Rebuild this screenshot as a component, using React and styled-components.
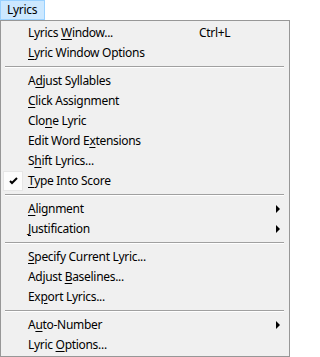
import React from "react";
import styled, { createGlobalStyle } from "styled-components";

const GlobalStyle = createGlobalStyle`
  body {
    margin: 0;
    background: #ffffff;
    font-family: "Segoe UI", "Noto Sans", "Open Sans", sans-serif;
    font-size: 12px;
    letter-spacing: -0.3px;
    color: #000000;
  }
`;

const Page = styled.div`
  width: 290px;
  height: 357px;
  display: flex;
  flex-direction: column;
`;

const MenuBar = styled.div`
  display: flex;
  height: 20px;
`;

const MenuTitle = styled.div`
  box-sizing: border-box;
  width: 45px;
  height: 20px;
  padding: 0 0 1px 6px;
  display: flex;
  align-items: center;
  background: #cce8ff;
  border: 1px solid #99d1ff;
`;

const Menu = styled.div`
  box-sizing: border-box;
  width: 290px;
  flex: 1;
  padding: 2px 2px 1px;
  background: #f0f0f0;
  border: 1px solid #979797;
  display: flex;
  flex-direction: column;
`;

const Item = styled.div`
  height: 20px;
  display: grid;
  grid-template-columns: 25px 171px 1fr 20px;
  align-items: center;
  white-space: nowrap;
`;

const CheckCell = styled.div`
  box-sizing: border-box;
  width: 20px;
  height: 20px;
  display: flex;
  align-items: center;
  justify-content: center;
  background: ${(p) => (p.$on ? "#fcfcfc" : "transparent")};
  border: 1px solid ${(p) => (p.$on ? "#e6e6e6" : "transparent")};
`;

const Label = styled.span`
  line-height: 20px;
`;

const Key = styled.span`
  text-decoration: underline;
  text-underline-offset: 2px;
`;

const Shortcut = styled.span`
  line-height: 20px;
`;

const Arrow = styled.span`
  justify-self: start;
  margin-left: 9px;
  width: 0;
  height: 0;
  border-top: 4px solid transparent;
  border-bottom: 4px solid transparent;
  border-left: 4px solid #000000;
`;

const Separator = styled.div`
  height: 8px;
  display: flex;
  align-items: center;
  margin: 0 3px 0 2px;

  &::before {
    content: "";
    flex: 1;
    height: 0;
    border-top: 1px solid #a0a0a0;
    border-bottom: 1px solid #ffffff;
  }
`;

const Check = () => (
  <svg width="9" height="8" viewBox="0 0 9 8">
    <path d="M1 4 L3 6 L8 1" stroke="#000" strokeWidth="2" fill="none" />
  </svg>
);

const groups = [
  [
    { text: "Lyrics Window...", key: 7, shortcut: "Ctrl+L" },
    { text: "Lyric Window Options", key: 0 },
  ],
  [
    { text: "Adjust Syllables", key: 1 },
    { text: "Click Assignment", key: 0 },
    { text: "Clone Lyric", key: 3 },
    { text: "Edit Word Extensions", key: 11 },
    { text: "Shift Lyrics...", key: 1 },
    { text: "Type Into Score", key: 0, checked: true },
  ],
  [
    { text: "Alignment", key: 0, sub: true },
    { text: "Justification", key: 0, sub: true },
  ],
  [
    { text: "Specify Current Lyric...", key: 0 },
    { text: "Adjust Baselines...", key: 7 },
    { text: "Export Lyrics...", key: 2 },
  ],
  [
    { text: "Auto-Number", key: 1, sub: true },
    { text: "Lyric Options...", key: 6 },
  ],
];

function MenuItem({ item }) {
  const { text, key } = item;
  return (
    <Item>
      <CheckCell $on={item.checked}>{item.checked && <Check />}</CheckCell>
      <Label>
        {text.slice(0, key)}
        <Key>{text[key]}</Key>
        {text.slice(key + 1)}
      </Label>
      <Shortcut>{item.shortcut}</Shortcut>
      {item.sub ? <Arrow /> : <span />}
    </Item>
  );
}

export default function App() {
  return (
    <Page>
      <GlobalStyle />
      <MenuBar>
        <MenuTitle>Lyrics</MenuTitle>
      </MenuBar>
      <Menu>
        {groups.map((group, i) => (
          <React.Fragment key={i}>
            {i > 0 && <Separator />}
            {group.map((item) => (
              <MenuItem key={item.text} item={item} />
            ))}
          </React.Fragment>
        ))}
      </Menu>
    </Page>
  );
}
